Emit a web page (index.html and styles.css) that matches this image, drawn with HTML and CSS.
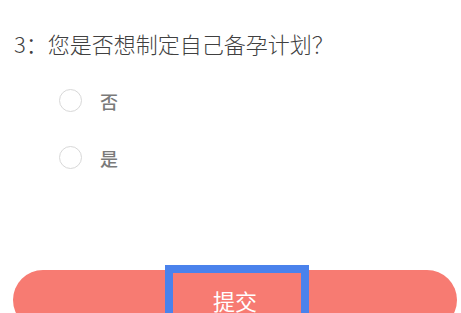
FILE: index.html
```html
<!DOCTYPE html>
<html lang="zh">
<head>
<meta charset="utf-8">
<link rel="stylesheet" href="styles.css">
</head>
<body>
<div class="page">
  <h2 class="question">3：您是否想制定自己备孕计划？</h2>
  <ul class="options">
    <li class="option"><span class="radio"></span><span class="label">否</span></li>
    <li class="option"><span class="radio"></span><span class="label">是</span></li>
  </ul>
  <div class="submit-wrap">
    <button class="submit">提交</button>
    <div class="highlight"></div>
  </div>
</div>
</body>
</html>
```
FILE: styles.css
```css
html, body {
  margin: 0;
  padding: 0;
  background: #fff;
}
body {
  font-family: "Noto Sans CJK SC", "Noto Sans", sans-serif;
  width: 461px;
  height: 313px;
  overflow: hidden;
}
.page {
  display: flex;
  flex-direction: column;
}
.question {
  margin: 0;
  padding: 29px 0 0 14px;
  font-size: 22px;
  line-height: 28px;
  font-weight: 300;
  color: #404040;
}
.options {
  list-style: none;
  margin: 15px 0 0 0;
  padding: 0 0 0 59px;
  display: flex;
  flex-direction: column;
}
.option {
  height: 57px;
  display: flex;
  align-items: center;
  gap: 18px;
}
.radio {
  width: 23px;
  height: 23px;
  box-sizing: border-box;
  border: 1.5px solid #d8d8d8;
  border-radius: 50%;
}
.label {
  font-size: 18px;
  font-weight: 500;
  color: #7a7a7a;
  line-height: 24px;
}
.submit-wrap {
  position: relative;
  margin: 84px 4px 0 13px;
}
.submit {
  display: block;
  width: 100%;
  height: 60px;
  border: none;
  border-radius: 30px;
  background: #f77b72;
  color: #fff;
  font-family: "Noto Sans CJK SC", "Noto Sans", sans-serif;
  font-size: 22px;
  font-weight: 400;
  padding: 0;
}
.highlight {
  position: absolute;
  left: 152px;
  top: -5px;
  width: 144px;
  height: 80px;
  box-sizing: border-box;
  border: 8px solid #4a82ec;
}
```
